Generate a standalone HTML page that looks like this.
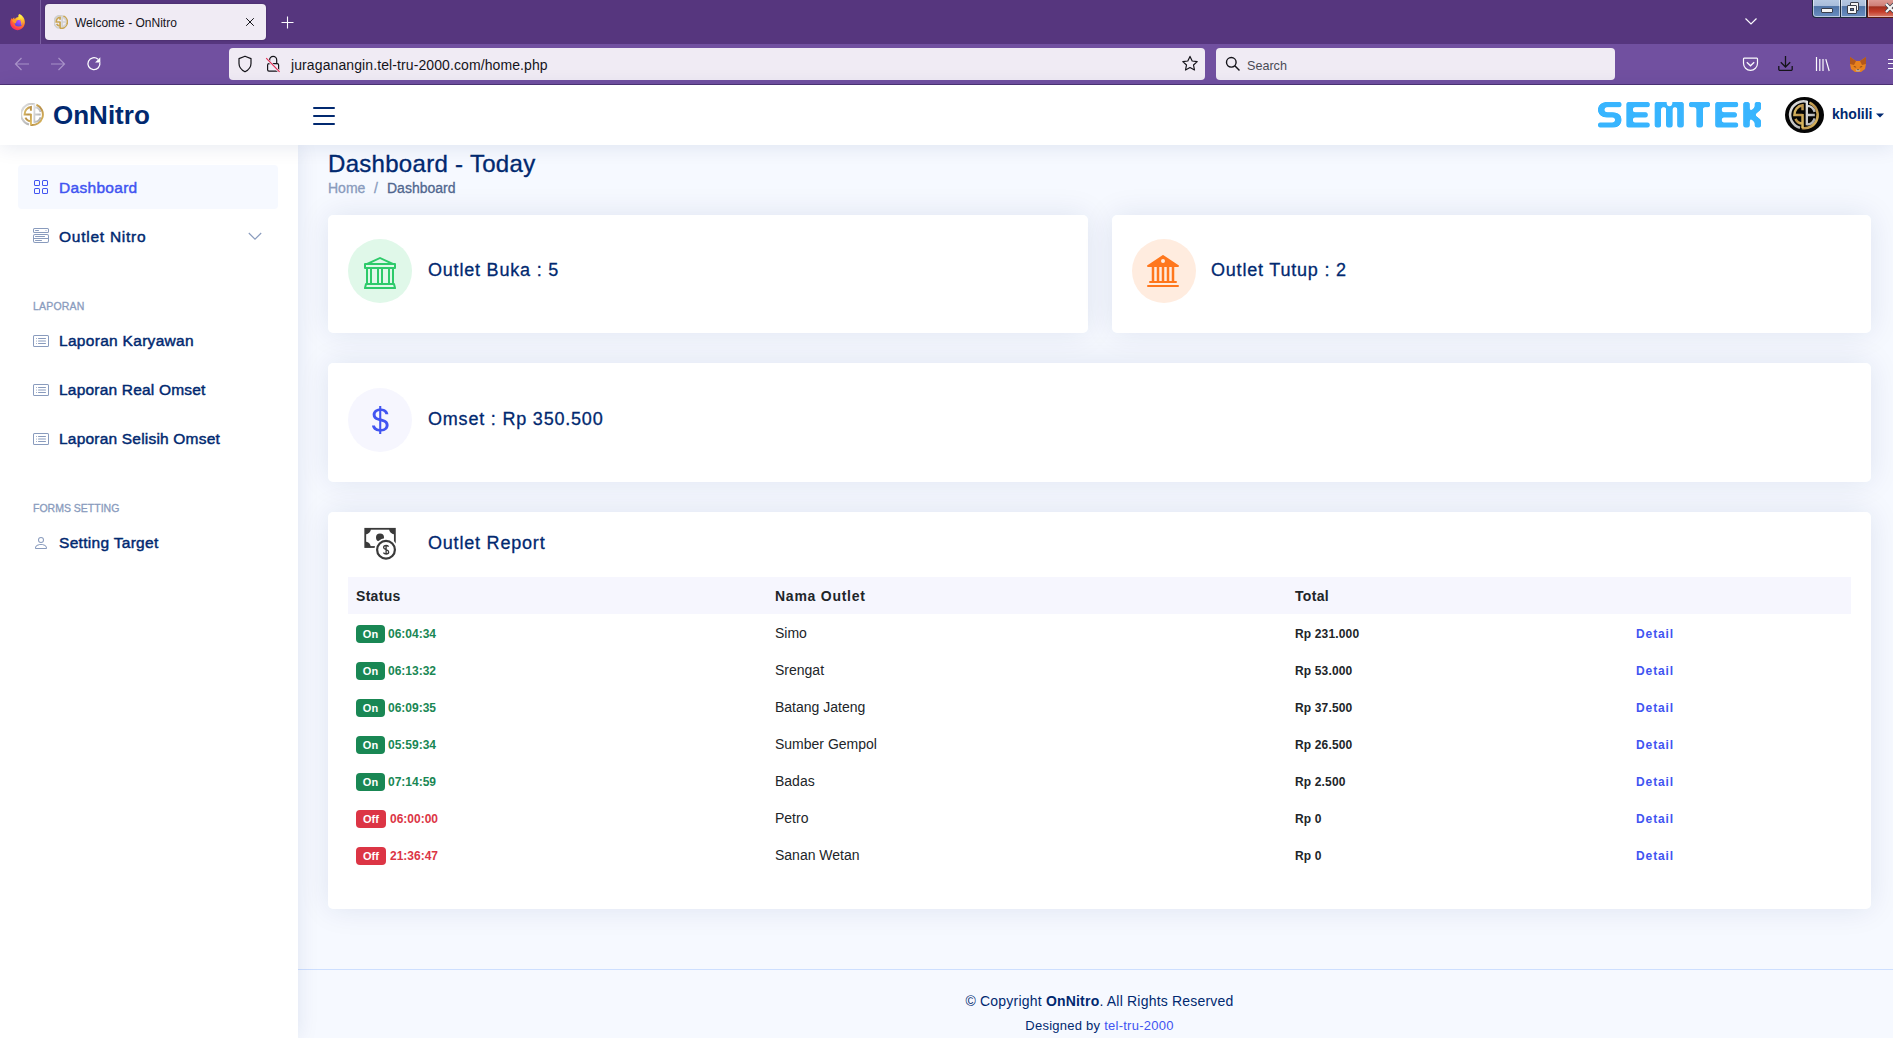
<!DOCTYPE html>
<html><head><meta charset="utf-8"><title>Welcome - OnNitro</title>
<style>
*{box-sizing:border-box;margin:0;padding:0}
html,body{width:1893px;height:1038px;overflow:hidden;font-family:"Liberation Sans",sans-serif;background:#f6f9ff;position:relative}
.abs{position:absolute}
.z6 .abs{z-index:6}
.nt{left:59px;font-size:15.5px;color:#012970;white-space:nowrap;line-height:18px;letter-spacing:0.3px;-webkit-text-stroke:0.45px currentColor}
.nh{left:33px;font-size:10.5px;color:#899bbd;-webkit-text-stroke:0.3px #899bbd;letter-spacing:0.2px;white-space:nowrap;line-height:13px}
.card{background:#fff;border-radius:5px;box-shadow:0 0 30px rgba(1,41,112,.1)}
.h1{left:328px;top:150px;font-size:24px;color:#012970;white-space:nowrap;line-height:28px;letter-spacing:0.3px;-webkit-text-stroke:0.35px #012970}
.bc{left:328px;top:180px;font-size:14px;color:#899bbd;white-space:nowrap;line-height:17px;-webkit-text-stroke:0.3px currentColor}
.ct{font-size:18px;color:#012970;white-space:nowrap;line-height:21px;letter-spacing:0.8px;-webkit-text-stroke:0.3px #012970}
.icircle{width:64px;height:64px;border-radius:50%}
.th{top:588px;font-size:14px;font-weight:bold;letter-spacing:0.3px;color:#212529;white-space:nowrap;line-height:17px}
.badge{left:356px;height:18px;border-radius:4px;color:#fff;font-size:11px;font-weight:bold;text-align:center;line-height:18px}
.tm{font-size:12px;font-weight:bold;line-height:18px;white-space:nowrap}
.td{left:775px;font-size:14px;color:#212529;line-height:18px;white-space:nowrap}
.tt{left:1295px;font-size:12px;font-weight:bold;letter-spacing:0.15px;color:#212529;line-height:18px;white-space:nowrap}
.dt{left:1636px;font-size:12px;font-weight:bold;letter-spacing:0.9px;color:#4154f1;line-height:18px;white-space:nowrap}
.ft{left:302px;width:1595px;text-align:center;color:#012970;white-space:nowrap;line-height:17px}
</style></head><body>
<!-- ===== Firefox chrome ===== -->
<div class="abs" style="left:0;top:0;width:1893px;height:44px;background:#56367e"></div>
<div class="abs" style="left:40px;top:0;width:1px;height:44px;background:#7a5ea0"></div>
<svg class="abs" style="left:9px;top:13px" width="18" height="18" viewBox="0 0 18 18">
 <defs>
  <radialGradient id="ffg" cx="0.72" cy="0.12" r="1">
   <stop offset="0" stop-color="#fff44f"/><stop offset="0.3" stop-color="#ffc22e"/><stop offset="0.6" stop-color="#ff7a2a"/><stop offset="0.85" stop-color="#ff3a50"/><stop offset="1" stop-color="#ff1f7a"/>
  </radialGradient>
  <radialGradient id="ffp" cx="0.65" cy="0.2" r="0.9">
   <stop offset="0" stop-color="#b94cff"/><stop offset="1" stop-color="#4f48e0"/>
  </radialGradient>
 </defs>
 <path d="M9 17.2C4.6 17.2 1.2 13.8 1.2 9.6c0-1.8.6-3.4 1.6-4.6l.8 1.2c.4-.9 1-1.5 1.7-1.7-.2.8 0 1.3.5 1.6 1.1-1.3 2.5-2 3.7-2.1-.5-.9-.2-2.1.7-3.1 3.4 1.3 5.7 4.5 5.7 8.4 0 4.3-3.3 7.9-7.7 7.9z" fill="url(#ffg)"/>
 <ellipse cx="9.6" cy="10.2" rx="3.8" ry="3.3" fill="url(#ffp)"/>
 <path d="M3.2 7.2C4.6 6.4 6.6 6.6 8.6 7.6 7.6 8.2 6.9 9 7 10.2 5.2 10 3.9 9 3.2 7.2z" fill="#ff9a2a"/>
 <path d="M10.5 5.8c1.6.3 3 1.7 3 3.8 0 1.2-.5 2.2-1.2 2.8.3-2.3-.4-4.6-1.8-6.6z" fill="#ffb62a"/>
</svg>
<div class="abs" style="left:45px;top:4px;width:221px;height:36px;background:#f0ebf4;border-radius:4px;box-shadow:0 0 2px rgba(0,0,0,.3)"></div>
<svg class="abs" style="left:54px;top:15px" width="14" height="14" viewBox="3.3 1.8 32.4 32.4"><g fill="none">
 <path d="M22.5 3.3A14.8 14.8 0 0 0 14.5 32.2" stroke="#cfcfcf" stroke-width="4"/>
 <path d="M25 4.3A14.8 14.8 0 0 1 16.5 32.5" stroke="#c9a552" stroke-width="4"/>
 <path d="M17.3 12.8V7.3A9.8 10.5 0 0 0 8.3 18H17.3M17.3 16.8V32.5M9.5 22.3A9 9 0 0 0 17.3 27.5" stroke="#c9a552" stroke-width="4"/>
 <path d="M22.1 2.5V29.5M22.1 7.8A9 10 0 0 1 30.8 14.5M22.1 18H31M30.8 21.8A9 10 0 0 1 22.1 28.5" stroke="#d2d2d2" stroke-width="3.6"/>
</g></svg>
<div class="abs" style="left:75px;top:16px;font-size:12px;color:#15141a;white-space:nowrap;line-height:14px">Welcome - OnNitro</div>
<svg class="abs" style="left:244px;top:16px" width="12" height="12" viewBox="0 0 12 12"><path d="M2.2 2.2L9.8 9.8M9.8 2.2L2.2 9.8" stroke="#15141a" stroke-width="1"/></svg>
<svg class="abs" style="left:280px;top:15px" width="15" height="15" viewBox="0 0 15 15"><path d="M7.5 1.5V13.5M1.5 7.5H13.5" stroke="#fbfbfe" stroke-width="1.1"/></svg>
<svg class="abs" style="left:1743px;top:15px" width="16" height="12" viewBox="0 0 16 12"><path d="M2.5 3.5L8 9L13.5 3.5" fill="none" stroke="#fbfbfe" stroke-width="1.2"/></svg>
<!-- window buttons -->
<div class="abs" style="left:1812px;top:-2px;width:29px;height:20px;border:1px solid #1d2a3c;border-top:none;border-radius:0 0 0 4px;background:linear-gradient(#b9cbe4 0%,#a9bddb 40%,#4f73a6 45%,#6a8fc2 100%);box-shadow:inset 0 0 0 1px rgba(255,255,255,.55)"></div>
<div class="abs" style="left:1841px;top:-2px;width:26px;height:20px;border:1px solid #1d2a3c;border-top:none;border-left:none;background:linear-gradient(#b9cbe4 0%,#a9bddb 40%,#4f73a6 45%,#6a8fc2 100%);box-shadow:inset 0 0 0 1px rgba(255,255,255,.55)"></div>
<div class="abs" style="left:1867px;top:-2px;width:30px;height:20px;border:1px solid #5a1a10;border-top:none;background:linear-gradient(#e2a29c 0%,#cf8078 40%,#a2301f 47%,#c63d2a 72%,#d98070 100%);box-shadow:inset 0 0 0 1px rgba(255,255,255,.45)"></div>
<div class="abs" style="left:1821px;top:8px;width:12px;height:5px;background:#f4f4f4;border:1px solid #3a3f4c;border-radius:1px"></div>
<div class="abs" style="left:1850px;top:2px;width:9px;height:9px;background:#f4f4f4;border:1px solid #3a3f4c;border-radius:1px"></div>
<div class="abs" style="left:1847px;top:5px;width:10px;height:9px;background:#f4f4f4;border:1px solid #3a3f4c;border-radius:1px"></div>
<div class="abs" style="left:1850px;top:8px;width:4px;height:3px;background:#5876a8;border:1px solid #3a3f4c"></div>
<svg class="abs" style="left:1884px;top:2px" width="12" height="12" viewBox="0 0 12 12"><path d="M2 2L10 10M10 2L2 10" stroke="#3a3f4c" stroke-width="3.6"/><path d="M2 2L10 10M10 2L2 10" stroke="#f6f6f6" stroke-width="2.2"/></svg>

<!-- nav bar -->
<div class="abs" style="left:0;top:44px;width:1893px;height:41px;background:#7150a0;border-bottom:1px solid #4d3273"></div>
<svg class="abs" style="left:13px;top:56px" width="18" height="16" viewBox="0 0 18 16"><path d="M2.5 8H16M8.5 2L2.5 8L8.5 14" fill="none" stroke="#a892c8" stroke-width="1.2"/></svg>
<svg class="abs" style="left:49px;top:56px" width="18" height="16" viewBox="0 0 18 16"><path d="M2 8H15.5M9.5 2L15.5 8L9.5 14" fill="none" stroke="#a892c8" stroke-width="1.2"/></svg>
<svg class="abs" style="left:85px;top:55px" width="18" height="18" viewBox="0 0 18 18"><path d="M14.8 7.5A6 6 0 1 1 13 4.3" fill="none" stroke="#fbfbfe" stroke-width="1.3"/><path d="M15.3 2.2V7.4H10.1Z" fill="#fbfbfe"/></svg>
<div class="abs" style="left:229px;top:48px;width:976px;height:32px;background:#f0ebf4;border-radius:4px"></div>
<svg class="abs" style="left:237px;top:55px" width="16" height="18" viewBox="0 0 16 18"><path d="M8 1.2L14 3.6V8.5C14 12.2 11.5 15 8 16.8C4.5 15 2 12.2 2 8.5V3.6Z" fill="none" stroke="#15141a" stroke-width="1.2" stroke-linejoin="round"/></svg>
<svg class="abs" style="left:265px;top:55px" width="17" height="18" viewBox="0 0 17 18"><path d="M4.6 8.8V4.9A3.55 3.55 0 0 1 11.7 4.9V8.8" fill="none" stroke="#15141a" stroke-width="1.2"/><rect x="2.6" y="8.7" width="11" height="7.5" rx="1.4" fill="none" stroke="#15141a" stroke-width="1.2"/><path d="M0.8 3L14.8 17.2" stroke="#f0ebf4" stroke-width="2.4"/><path d="M1.2 3.2L14.6 16.8" stroke="#e22850" stroke-width="1.1"/></svg>
<div class="abs" style="left:291px;top:57px;font-size:14px;letter-spacing:0.1px;color:#15141a;white-space:nowrap;line-height:16px">juraganangin.tel-tru-2000.com/home.php</div>
<svg class="abs" style="left:1181px;top:55px" width="18" height="17" viewBox="0 0 18 17"><path d="M9 1.4L11.2 6L16.2 6.6L12.5 10L13.5 15L9 12.5L4.5 15L5.5 10L1.8 6.6L6.8 6Z" fill="none" stroke="#15141a" stroke-width="1.2" stroke-linejoin="round"/></svg>
<div class="abs" style="left:1216px;top:48px;width:399px;height:32px;background:#f0ebf4;border-radius:4px"></div>
<svg class="abs" style="left:1225px;top:56px" width="16" height="16" viewBox="0 0 16 16"><circle cx="6.3" cy="6.3" r="4.8" fill="none" stroke="#15141a" stroke-width="1.4"/><path d="M9.8 9.8L14.5 14.5" stroke="#15141a" stroke-width="1.5"/></svg>
<div class="abs" style="left:1247px;top:59px;font-size:12.6px;color:#4a4a55;white-space:nowrap;line-height:15px">Search</div>
<svg class="abs" style="left:1742px;top:57px" width="17" height="15" viewBox="0 0 17 15"><path d="M2.2 1.2H14.8A.8.8 0 0 1 15.5 2V6.3A7 7 0 0 1 1.5 6.3V2A.8.8 0 0 1 2.2 1.2Z" fill="none" stroke="#fbfbfe" stroke-width="1.2"/><path d="M4.8 5.2L8.5 8.8L12.2 5.2" fill="none" stroke="#fbfbfe" stroke-width="1.3"/></svg>
<svg class="abs" style="left:1777px;top:55px" width="17" height="17" viewBox="0 0 17 17"><path d="M8.5 1V12M3.8 7.3L8.5 12L13.2 7.3" fill="none" stroke="#15141a" stroke-width="1.3"/><path d="M1.8 11V14.2A1.2 1.2 0 0 0 3 15.4H14A1.2 1.2 0 0 0 15.2 14.2V11" fill="none" stroke="#15141a" stroke-width="1.3"/></svg>
<svg class="abs" style="left:1814px;top:56px" width="17" height="16" viewBox="0 0 17 16"><path d="M2.5 1V15M5.8 3V15M9 3V15M11.8 3.2L15.2 15" fill="none" stroke="#fbfbfe" stroke-width="1.2"/></svg>
<svg class="abs" style="left:1849px;top:56px" width="18" height="17" viewBox="0 0 18 17">
 <path d="M1 1L7 5H11L17 1L17 8L16 13L12 16H6L2 13L1 8Z" fill="#e8821e"/>
 <path d="M1 1L7 5L5 9L1 8Z" fill="#b4581a"/><path d="M17 1L11 5L13 9L17 8Z" fill="#b4581a"/>
 <path d="M6.5 13.5H11.5L10.5 15.5H7.5Z" fill="#c0ad9e"/><path d="M8.2 13.3H9.8L9 14.3Z" fill="#161616"/>
 <path d="M4.8 10.5L7.2 11.2M13.2 10.5L10.8 11.2" stroke="#763d16" stroke-width="0.8"/>
</svg>
<div class="abs" style="left:1888px;top:59px;width:8px;height:1px;background:#fbfbfe"></div><div class="abs" style="left:1888px;top:63px;width:8px;height:1px;background:#fbfbfe"></div><div class="abs" style="left:1888px;top:68px;width:8px;height:1px;background:#fbfbfe"></div>
<svg width="0" height="0" style="position:absolute"><defs>
<linearGradient id="gold" x1="0" y1="0" x2="1" y2="1"><stop offset="0" stop-color="#e3c46a"/><stop offset="0.5" stop-color="#b8904a"/><stop offset="1" stop-color="#e0be62"/></linearGradient>
<linearGradient id="silv" x1="0" y1="0" x2="1" y2="1"><stop offset="0" stop-color="#e4e4e4"/><stop offset="1" stop-color="#a6a6a6"/></linearGradient>
<symbol id="se" viewBox="0 0 39 36">
 <g fill="none" stroke-linecap="butt">
 <path d="M22.5 3.3A14.8 14.8 0 0 0 14.5 32.2" stroke="url(#silv)" stroke-width="2.8"/>
 <path d="M25 4.3A14.8 14.8 0 0 1 16.5 32.5" stroke="url(#gold)" stroke-width="2.8"/>
 <path d="M17.3 12.8V7.3A9.8 10.5 0 0 0 8.3 18H17.3M17.3 16.8V32.5M9.5 22.3A9 9 0 0 0 17.3 27.5" stroke="url(#gold)" stroke-width="2.8"/>
 <path d="M22.1 2.5V29.5M22.1 7.8A9 10 0 0 1 30.8 14.5M22.1 18H31M30.8 21.8A9 10 0 0 1 22.1 28.5" stroke="url(#silv)" stroke-width="2.6"/>
 </g>
</symbol></defs></svg>
<!-- ===== Page ===== -->
<div class="abs" style="left:0;top:85px;width:1893px;height:953px;background:#f6f9ff"></div>
<!-- sidebar -->
<div class="abs" style="left:-2px;top:145px;width:300px;height:893px;background:#fff;box-shadow:0 0 20px rgba(1,41,112,.1);z-index:4"></div>
<!-- header -->
<div class="abs" style="left:0;top:85px;width:1893px;height:60px;background:#fff;box-shadow:0 2px 20px rgba(1,41,112,.1);z-index:5"></div>
<div class="z6">
<svg class="abs" style="left:21px;top:103px" width="23" height="23" viewBox="3.3 1.8 32.4 32.4"><use href="#se" width="39" height="36"/></svg>
<div class="abs" style="left:53px;top:100px;font-size:26px;font-weight:bold;color:#012970;white-space:nowrap">OnNitro</div>
<div class="abs" style="left:313px;top:107px;width:22px;height:2px;background:#012970;border-radius:1px"></div>
<div class="abs" style="left:313px;top:115px;width:22px;height:2px;background:#012970;border-radius:1px"></div>
<div class="abs" style="left:313px;top:123px;width:22px;height:2px;background:#012970;border-radius:1px"></div>
<!-- SEMTEK -->
<svg class="abs" style="left:1596px;top:100px" width="169" height="30" viewBox="-2 -2 169 30">
 <defs><filter id="rnd" x="-5%" y="-20%" width="110%" height="140%"><feGaussianBlur stdDeviation="0.85"/><feComponentTransfer><feFuncA type="linear" slope="4" intercept="-1.5"/></feComponentTransfer></filter></defs>
 <g filter="url(#rnd)">
 <g transform="scale(1.25,1)" fill="none" stroke="#39b5fe" stroke-width="5.2">
  <path d="M18.8 2.6H6.5A3.9 3.9 0 0 0 2.6 6.5V8.9A3.9 3.9 0 0 0 6.5 12.8H12.3A3.9 3.9 0 0 1 16.2 16.7V19.1A3.9 3.9 0 0 1 12.3 23H0"/>
  <path d="M41.4 2.6H25.3V23H41.4M25.3 12.8H39.8"/>
  <path d="M47.9 25.6V2.6H66V25.6M57.1 2.6V25.6"/>
  <path d="M72.8 2.6H89.6M81.3 2.6V25.6"/>
  <path d="M112.2 2.6H96.4V23H112.2M96.4 12.8H111.1"/>
  <path d="M118.8 0V25.6M118.8 12.8H121.8L127.9 6.5V0M121.8 12.8L127.9 19.1V25.6"/>
 </g></g>
 <ellipse cx="71.5" cy="-0.3" rx="2.9" ry="4.6" fill="#fff"/>
</svg>
<!-- avatar -->
<svg class="abs" style="left:1785px;top:97px" width="39" height="36" viewBox="0 0 39 36"><ellipse cx="19.5" cy="18" rx="19.5" ry="18" fill="#050505"/><use href="#se" width="39" height="36" transform="translate(19.5 18) scale(0.9) translate(-19.5 -18)"/></svg>
<div class="abs" style="left:1832px;top:106px;font-size:14px;font-weight:bold;color:#012970;white-space:nowrap">kholili</div>
<svg class="abs" style="left:1875px;top:112px" width="10" height="7" viewBox="0 0 10 7"><path d="M1 1.5H9L5 5.5Z" fill="#012970"/></svg>
</div>

<div class="z6">
<div class="abs" style="left:18px;top:165px;width:260px;height:44px;border-radius:4px;background:#f6f9ff"></div>
<svg class="abs" style="left:33px;top:179px" width="16" height="16" viewBox="0 0 16 16" fill="#4154f1"><path d="M1 2.5A1.5 1.5 0 0 1 2.5 1h3A1.5 1.5 0 0 1 7 2.5v3A1.5 1.5 0 0 1 5.5 7h-3A1.5 1.5 0 0 1 1 5.5v-3zM2.5 2a.5.5 0 0 0-.5.5v3a.5.5 0 0 0 .5.5h3a.5.5 0 0 0 .5-.5v-3a.5.5 0 0 0-.5-.5h-3zm6.5.5A1.5 1.5 0 0 1 10.5 1h3A1.5 1.5 0 0 1 15 2.5v3A1.5 1.5 0 0 1 13.5 7h-3A1.5 1.5 0 0 1 9 5.5v-3zm1.5-.5a.5.5 0 0 0-.5.5v3a.5.5 0 0 0 .5.5h3a.5.5 0 0 0 .5-.5v-3a.5.5 0 0 0-.5-.5h-3zM1 10.5A1.5 1.5 0 0 1 2.5 9h3A1.5 1.5 0 0 1 7 10.5v3A1.5 1.5 0 0 1 5.5 15h-3A1.5 1.5 0 0 1 1 13.5v-3zm1.5-.5a.5.5 0 0 0-.5.5v3a.5.5 0 0 0 .5.5h3a.5.5 0 0 0 .5-.5v-3a.5.5 0 0 0-.5-.5h-3zm6.5.5A1.5 1.5 0 0 1 10.5 9h3a1.5 1.5 0 0 1 1.5 1.5v3a1.5 1.5 0 0 1-1.5 1.5h-3A1.5 1.5 0 0 1 9 13.5v-3zm1.5-.5a.5.5 0 0 0-.5.5v3a.5.5 0 0 0 .5.5h3a.5.5 0 0 0 .5-.5v-3a.5.5 0 0 0-.5-.5h-3z"/></svg>
<div class="abs nt" style="top:179px;color:#4154f1">Dashboard</div>
<svg class="abs" style="left:33px;top:228px" width="16" height="16" viewBox="0 0 16 16" fill="#899bbd"><path d="M0 1.5A1.5 1.5 0 0 1 1.5 0h13A1.5 1.5 0 0 1 16 1.5v2A1.5 1.5 0 0 1 14.5 5h-13A1.5 1.5 0 0 1 0 3.5v-2zM1.5 1a.5.5 0 0 0-.5.5v2a.5.5 0 0 0 .5.5h13a.5.5 0 0 0 .5-.5v-2a.5.5 0 0 0-.5-.5h-13z"/><path d="M2 2.5a.5.5 0 0 1 .5-.5h3a.5.5 0 0 1 0 1h-3a.5.5 0 0 1-.5-.5zm10.823.323-.396-.396A.25.25 0 0 1 12.604 2h.792a.25.25 0 0 1 .177.427l-.396.396a.25.25 0 0 1-.354 0zM0 8a2 2 0 0 1 2-2h12a2 2 0 0 1 2 2v5a2 2 0 0 1-2 2H2a2 2 0 0 1-2-2V8zm1 3v2a1 1 0 0 0 1 1h12a1 1 0 0 0 1-1v-2H1zm14-1V8a1 1 0 0 0-1-1H2a1 1 0 0 0-1 1v2h14zM2 8.5a.5.5 0 0 1 .5-.5h9a.5.5 0 0 1 0 1h-9a.5.5 0 0 1-.5-.5zm0 4a.5.5 0 0 1 .5-.5h6a.5.5 0 0 1 0 1h-6a.5.5 0 0 1-.5-.5z"/></svg>
<div class="abs nt" style="top:228px;letter-spacing:0.75px">Outlet Nitro</div>
<svg class="abs" style="left:247px;top:230px" width="16" height="12" viewBox="0 0 16 12"><path d="M1.8 3L8 9.2L14.2 3" fill="none" stroke="#899bbd" stroke-width="1.1"/></svg>
<div class="abs nh" style="top:300px">LAPORAN</div>
<div class="abs nh" style="top:502px;letter-spacing:0px">FORMS SETTING</div>
<svg class="abs ic" style="left:33px;top:333px" width="16" height="16" viewBox="0 0 16 16" fill="#899bbd"><path d="M14.5 3a.5.5 0 0 1 .5.5v9a.5.5 0 0 1-.5.5h-13a.5.5 0 0 1-.5-.5v-9a.5.5 0 0 1 .5-.5h13zm-13-1A1.5 1.5 0 0 0 0 3.5v9A1.5 1.5 0 0 0 1.5 14h13a1.5 1.5 0 0 0 1.5-1.5v-9A1.5 1.5 0 0 0 14.5 2h-13z"/><path d="M5 8a.5.5 0 0 1 .5-.5h7a.5.5 0 0 1 0 1h-7A.5.5 0 0 1 5 8zm0-2.5a.5.5 0 0 1 .5-.5h7a.5.5 0 0 1 0 1h-7a.5.5 0 0 1-.5-.5zm0 5a.5.5 0 0 1 .5-.5h7a.5.5 0 0 1 0 1h-7a.5.5 0 0 1-.5-.5zm-1-5a.5.5 0 1 1-1 0 .5.5 0 0 1 1 0zM4 8a.5.5 0 1 1-1 0 .5.5 0 0 1 1 0zm0 2.5a.5.5 0 1 1-1 0 .5.5 0 0 1 1 0z"/></svg>
<div class="abs nt" style="top:332px">Laporan Karyawan</div>
<svg class="abs ic" style="left:33px;top:382px" width="16" height="16" viewBox="0 0 16 16" fill="#899bbd"><path d="M14.5 3a.5.5 0 0 1 .5.5v9a.5.5 0 0 1-.5.5h-13a.5.5 0 0 1-.5-.5v-9a.5.5 0 0 1 .5-.5h13zm-13-1A1.5 1.5 0 0 0 0 3.5v9A1.5 1.5 0 0 0 1.5 14h13a1.5 1.5 0 0 0 1.5-1.5v-9A1.5 1.5 0 0 0 14.5 2h-13z"/><path d="M5 8a.5.5 0 0 1 .5-.5h7a.5.5 0 0 1 0 1h-7A.5.5 0 0 1 5 8zm0-2.5a.5.5 0 0 1 .5-.5h7a.5.5 0 0 1 0 1h-7a.5.5 0 0 1-.5-.5zm0 5a.5.5 0 0 1 .5-.5h7a.5.5 0 0 1 0 1h-7a.5.5 0 0 1-.5-.5zm-1-5a.5.5 0 1 1-1 0 .5.5 0 0 1 1 0zM4 8a.5.5 0 1 1-1 0 .5.5 0 0 1 1 0zm0 2.5a.5.5 0 1 1-1 0 .5.5 0 0 1 1 0z"/></svg>
<div class="abs nt" style="top:381px;letter-spacing:0.2px">Laporan Real Omset</div>
<svg class="abs ic" style="left:33px;top:431px" width="16" height="16" viewBox="0 0 16 16" fill="#899bbd"><path d="M14.5 3a.5.5 0 0 1 .5.5v9a.5.5 0 0 1-.5.5h-13a.5.5 0 0 1-.5-.5v-9a.5.5 0 0 1 .5-.5h13zm-13-1A1.5 1.5 0 0 0 0 3.5v9A1.5 1.5 0 0 0 1.5 14h13a1.5 1.5 0 0 0 1.5-1.5v-9A1.5 1.5 0 0 0 14.5 2h-13z"/><path d="M5 8a.5.5 0 0 1 .5-.5h7a.5.5 0 0 1 0 1h-7A.5.5 0 0 1 5 8zm0-2.5a.5.5 0 0 1 .5-.5h7a.5.5 0 0 1 0 1h-7a.5.5 0 0 1-.5-.5zm0 5a.5.5 0 0 1 .5-.5h7a.5.5 0 0 1 0 1h-7a.5.5 0 0 1-.5-.5zm-1-5a.5.5 0 1 1-1 0 .5.5 0 0 1 1 0zM4 8a.5.5 0 1 1-1 0 .5.5 0 0 1 1 0zm0 2.5a.5.5 0 1 1-1 0 .5.5 0 0 1 1 0z"/></svg>
<div class="abs nt" style="top:430px;letter-spacing:0.2px">Laporan Selisih Omset</div>
<svg class="abs" style="left:33px;top:535px" width="16" height="16" viewBox="0 0 16 16" fill="#899bbd"><path d="M8 8a3 3 0 1 0 0-6 3 3 0 0 0 0 6Zm2-3a2 2 0 1 1-4 0 2 2 0 0 1 4 0Zm4 8c0 1-1 1-1 1H3s-1 0-1-1 1-4 6-4 6 3 6 4Zm-1-.004c-.001-.246-.154-.986-.832-1.664C11.516 10.68 10.289 10 8 10c-2.29 0-3.516.68-4.168 1.332-.678.678-.83 1.418-.832 1.664h10Z"/></svg>
<div class="abs nt" style="top:534px">Setting Target</div>
</div>

<!-- main -->
<div class="abs h1">Dashboard - Today</div>
<div class="abs bc">Home</div>
<div class="abs bc" style="left:374px">/</div>
<div class="abs bc" style="left:387px;color:#51678f">Dashboard</div>

<div class="abs card" style="left:328px;top:215px;width:760px;height:118px"></div>
<div class="abs card" style="left:1112px;top:215px;width:759px;height:118px"></div>
<div class="abs card" style="left:328px;top:363px;width:1543px;height:119px"></div>
<div class="abs card" style="left:328px;top:512px;width:1543px;height:397px"></div>

<div class="abs icircle" style="left:348px;top:239px;background:#e0f8e9"></div>
<svg class="abs" style="left:364px;top:257px" width="32" height="32" viewBox="0 0 16 16" fill="#2eca6a"><path d="m8 0 6.61 3h.89a.5.5 0 0 1 .5.5v2a.5.5 0 0 1-.5.5H15v7a.5.5 0 0 1 .485.38l.5 2a.498.498 0 0 1-.485.62H.5a.498.498 0 0 1-.485-.62l.5-2A.501.501 0 0 1 1 13V6H.5a.5.5 0 0 1-.5-.5v-2A.5.5 0 0 1 .5 3h.89L8 0ZM3.777 3h8.447L8 1 3.777 3ZM2 6v7h1V6H2Zm2 0v7h2.5V6H4Zm3.5 0v7h1V6h-1Zm2 0v7H12V6H9.5ZM13 6v7h1V6h-1Zm2-1V4H1v1h14Zm-.39 9H1.39l-.25 1h13.72l-.25-1Z"/></svg>
<div class="abs ct" style="left:428px;top:260px">Outlet Buka : 5</div>

<div class="abs icircle" style="left:1132px;top:239px;background:#ffecdf"></div>
<svg class="abs" style="left:1147px;top:255px" width="32" height="32" viewBox="0 0 16 16" fill="#ff771d"><path d="M8.277.084a.5.5 0 0 0-.554 0l-7.5 5A.5.5 0 0 0 .5 6h1.875v7H1.5a.5.5 0 0 0 0 1h13a.5.5 0 1 0 0-1h-.875V6H15.5a.5.5 0 0 0 .277-.916l-7.5-5zM12.375 6v7h-1.25V6h1.25zm-2.5 0v7h-1.25V6h1.25zm-2.5 0v7h-1.25V6h1.25zm-2.5 0v7h-1.25V6h1.25zM8 4a1 1 0 1 1 0-2 1 1 0 0 1 0 2zM.5 15a.5.5 0 0 0 0 1h15a.5.5 0 0 0 0-1H.5z"/></svg>
<div class="abs ct" style="left:1211px;top:260px">Outlet Tutup : 2</div>

<div class="abs icircle" style="left:348px;top:388px;background:#f6f6fe"></div>
<svg class="abs" style="left:364px;top:404px" width="32" height="32" viewBox="0 0 16 16" fill="#4154f1"><path d="M4 10.781c.148 1.667 1.513 2.85 3.591 3.003V15h1.043v-1.216c2.27-.179 3.678-1.438 3.678-3.3 0-1.59-.947-2.51-2.956-3.028l-.722-.187V3.467c1.122.11 1.879.714 2.07 1.616h1.47c-.166-1.6-1.54-2.748-3.54-2.875V1H7.591v1.233c-1.939.23-3.27 1.472-3.27 3.156 0 1.454.966 2.483 2.661 2.917l.61.162v4.031c-1.149-.17-1.94-.8-2.131-1.718H4zm3.391-3.836c-1.043-.263-1.6-.825-1.6-1.616 0-.944.704-1.641 1.8-1.828v3.495l-.2-.05zm1.591 1.872c1.287.323 1.852.859 1.852 1.769 0 1.097-.826 1.828-2.2 1.939V8.73l.348.086z"/></svg>
<div class="abs ct" style="left:428px;top:409px">Omset : Rp 350.500</div>

<svg class="abs" style="left:358px;top:522px" width="44" height="44" viewBox="0 0 44 44">
 <rect x="7.25" y="6.8" width="29.6" height="18.2" fill="#fff" stroke="#3a3a3a" stroke-width="1.8"/>
 <path d="M7 6.5H13A6 6 0 0 1 7 12.5Z M37 6.5H31A6 6 0 0 0 37 12.5Z M7 25.2V19.4A5.8 5.8 0 0 1 12.8 25.2Z" fill="#3a3a3a"/>
 <circle cx="22" cy="15.5" r="4" fill="#3a3a3a"/>
 <circle cx="28" cy="27.8" r="11.6" fill="#fff"/>
 <circle cx="28" cy="27.8" r="8.9" fill="none" stroke="#3a3a3a" stroke-width="2.2"/>
 <path d="M30.6 24.6C30 23.8 29.2 23.5 28.1 23.5C26.6 23.5 25.6 24.3 25.6 25.5C25.6 28.1 30.7 27 30.7 29.9C30.7 31.2 29.6 31.9 28.1 31.9C26.9 31.9 26 31.5 25.4 30.6M28.1 22.8V32.8" fill="none" stroke="#3a3a3a" stroke-width="1.3"/>
</svg>
<div class="abs ct" style="left:428px;top:533px">Outlet Report</div>
<!-- table -->
<div class="abs" style="left:348px;top:577px;width:1503px;height:37px;background:#f6f6fe"></div>
<div class="abs th" style="left:356px">Status</div>
<div class="abs th" style="left:775px;letter-spacing:0.75px">Nama Outlet</div>
<div class="abs th" style="left:1295px">Total</div>
<div class="abs badge" style="top:625px;width:29px;background:#198754">On</div>
<div class="abs tm" style="left:388px;top:625px;color:#198754">06:04:34</div>
<div class="abs td" style="top:624px">Simo</div>
<div class="abs tt" style="top:625px">Rp 231.000</div>
<div class="abs dt" style="top:625px">Detail</div>
<div class="abs badge" style="top:662px;width:29px;background:#198754">On</div>
<div class="abs tm" style="left:388px;top:662px;color:#198754">06:13:32</div>
<div class="abs td" style="top:661px">Srengat</div>
<div class="abs tt" style="top:662px">Rp 53.000</div>
<div class="abs dt" style="top:662px">Detail</div>
<div class="abs badge" style="top:699px;width:29px;background:#198754">On</div>
<div class="abs tm" style="left:388px;top:699px;color:#198754">06:09:35</div>
<div class="abs td" style="top:698px">Batang Jateng</div>
<div class="abs tt" style="top:699px">Rp 37.500</div>
<div class="abs dt" style="top:699px">Detail</div>
<div class="abs badge" style="top:736px;width:29px;background:#198754">On</div>
<div class="abs tm" style="left:388px;top:736px;color:#198754">05:59:34</div>
<div class="abs td" style="top:735px">Sumber Gempol</div>
<div class="abs tt" style="top:736px">Rp 26.500</div>
<div class="abs dt" style="top:736px">Detail</div>
<div class="abs badge" style="top:773px;width:29px;background:#198754">On</div>
<div class="abs tm" style="left:388px;top:773px;color:#198754">07:14:59</div>
<div class="abs td" style="top:772px">Badas</div>
<div class="abs tt" style="top:773px">Rp 2.500</div>
<div class="abs dt" style="top:773px">Detail</div>
<div class="abs badge" style="top:810px;width:30px;background:#dc3545">Off</div>
<div class="abs tm" style="left:390px;top:810px;color:#dc3545">06:00:00</div>
<div class="abs td" style="top:809px">Petro</div>
<div class="abs tt" style="top:810px">Rp 0</div>
<div class="abs dt" style="top:810px">Detail</div>
<div class="abs badge" style="top:847px;width:30px;background:#dc3545">Off</div>
<div class="abs tm" style="left:390px;top:847px;color:#dc3545">21:36:47</div>
<div class="abs td" style="top:846px">Sanan Wetan</div>
<div class="abs tt" style="top:847px">Rp 0</div>
<div class="abs dt" style="top:847px">Detail</div>
<!-- footer -->
<div class="abs" style="left:298px;top:969px;width:1595px;height:1px;background:#cddfff"></div>
<div class="abs ft" style="top:993px;font-size:14px;letter-spacing:0.2px">&copy; Copyright <b>OnNitro</b>. All Rights Reserved</div>
<div class="abs ft" style="top:1017px;font-size:13px;letter-spacing:0.25px">Designed by <span style="color:#4154f1">tel-tru-2000</span></div>
</body></html>
